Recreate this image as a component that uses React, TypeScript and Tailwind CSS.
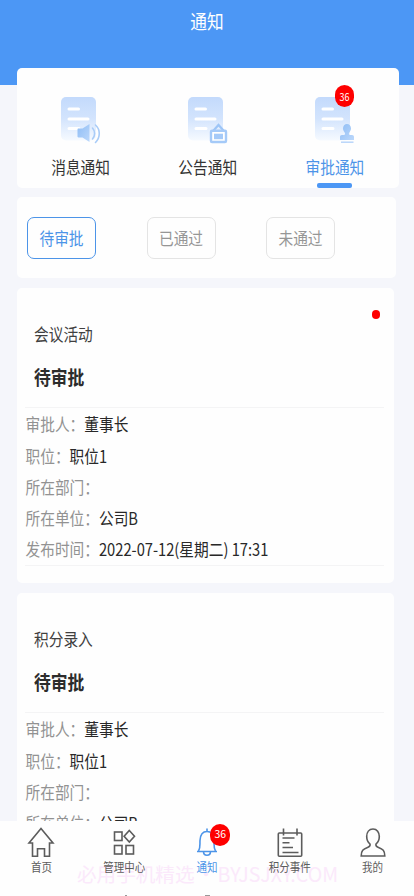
import type { ReactNode } from 'react'
import clsx from 'clsx'

interface Notice {
  title: string
  status: string
  unread: boolean
  rows: { label: string; value: string }[]
}

const rows = [
  { label: '审批人：', value: '董事长' },
  { label: '职位：', value: '职位1' },
  { label: '所在部门：', value: '' },
  { label: '所在单位：', value: '公司B' },
  { label: '发布时间：', value: '2022-07-12(星期二) 17:31' },
]

const notices: Notice[] = [
  { title: '会议活动', status: '待审批', unread: true, rows },
  { title: '积分录入', status: '待审批', unread: false, rows },
]

const filters = ['待审批', '已通过', '未通过']

// Tall, narrow lettering used everywhere on the page
function Tall({ children, className }: { children: ReactNode; className?: string }) {
  return <span className={clsx('inline-block scale-y-[1.15] whitespace-nowrap', className)}>{children}</span>
}

function DocIcon({ children }: { children: ReactNode }) {
  return (
    <svg width="42" height="50" viewBox="0 0 42 50" fill="none">
      <defs>
        <linearGradient id="doc" x1="0" y1="0" x2="0" y2="1">
          <stop offset="0" stopColor="#c3dafc" />
          <stop offset="0.5" stopColor="#d3e4fd" />
          <stop offset="1" stopColor="#f6faff" />
        </linearGradient>
        <linearGradient id="mark" x1="0" y1="0" x2="1" y2="1">
          <stop offset="0" stopColor="#8fbdf5" />
          <stop offset="1" stopColor="#bcd8fb" />
        </linearGradient>
      </defs>
      <rect x="1" y="1" width="35" height="43.5" rx="5" fill="url(#doc)" />
      <path d="M9 13h9.500M9 23h19M9 32.500h10" stroke="#fff" strokeWidth="3" strokeLinecap="round" />
      {children}
    </svg>
  )
}

const tabs = [
  {
    name: '消息通知',
    icon: (
      <DocIcon>
        <path d="M18.500 32.500h4l7-4.500v18l-7-4.500h-4c-.8 0-1-.5-1-1.200v-6.600c0-.8.3-1.200 1-1.200z" fill="url(#mark)" />
        <path d="M32.500 32c2.800 3 2.800 8 0 11M35.500 29c5 4.500 5 12.500 0 17.500" stroke="#a9ccf8" strokeWidth="1.600" strokeLinecap="round" />
      </DocIcon>
    ),
  },
  {
    name: '公告通知',
    icon: (
      <DocIcon>
        <path d="M26.500 34.500l5-5.500 5 5.500" stroke="#9dc5f7" strokeWidth="2.200" />
        <rect x="24" y="34.800" width="15" height="11.200" rx="1" fill="#fff" stroke="#a5caf8" strokeWidth="2.400" />
        <rect x="27" y="37.700" width="9" height="5.500" fill="#a5caf8" />
      </DocIcon>
    ),
  },
  {
    name: '审批通知',
    icon: (
      <DocIcon>
        <path
          d="M33 28c2.300 0 4 2 4 4.500 0 1.800-1 3-1.800 4.200-.6 1-.4 2.300 1 2.300H38c1.300 0 2 .7 2 2v3H26v-3c0-1.300.7-2 2-2h1.800c1.400 0 1.600-1.300 1-2.300-.8-1.200-1.800-2.400-1.800-4.200 0-2.500 1.700-4.500 4-4.500z"
          fill="url(#mark)"
        />
        <path d="M27 46.200h12.500" stroke="#b9d5fa" strokeWidth="1.500" />
      </DocIcon>
    ),
    badge: '36',
  },
]

const navItems = [
  {
    name: '首页',
    icon: <path d="M3.500 16H2L14 1.500 26 16h-3.500v13.200h-5v-7.400h-7v7.400h-5V16z" />,
  },
  {
    name: '管理中心',
    icon: (
      <>
        <rect x="4.500" y="5" width="7.500" height="8.500" />
        <path d="M19.300 3.500l5.200 5.800-5.200 5.800-5.200-5.800z" />
        <rect x="4.500" y="18.500" width="7.500" height="8.500" />
        <rect x="16" y="18.500" width="7.500" height="8.500" />
      </>
    ),
  },
  {
    name: '通知',
    active: true,
    badge: '36',
    icon: (
      <>
        <path d="M14 1.500v3M5.500 24c2-3 1.300-6 1.500-10.500.3-6 2.800-9 7-9s6.700 3 7 9c.2 4.500-.5 7.500 1.500 10.500" />
        <path d="M4 24.500h20M10.500 24.500c0 5 7 5 7 0" />
      </>
    ),
  },
  {
    name: '积分事件',
    icon: (
      <>
        <rect x="2.300" y="6" width="23.400" height="23.200" rx="1" />
        <path d="M7.500 1.500v7M21 1.500v7M6.500 11h12M6.500 15.800h7M6.500 20.500h10.500M6.500 25.500h16" />
      </>
    ),
  },
  {
    name: '我的',
    icon: (
      <path d="M14 2c-4 0-6.300 3.300-6.300 7.500 0 3.500 1.300 5.800 3.300 7.500.5 1.700-.3 2.500-2 3.200-5 2-6.800 3-6.800 8.800h23.600c0-5.800-1.800-6.800-6.800-8.800-1.700-.7-2.500-1.500-2-3.200 2-1.700 3.300-4 3.300-7.500C20.300 5.300 18 2 14 2z" />
    ),
  },
]

function NoticeCard({ notice }: { notice: Notice }) {
  return (
    <section className="relative h-[295.5px] w-[376.5px] shrink-0 rounded-[5px] bg-[#fefefe] pt-8">
      {notice.unread && <span className="absolute top-[22.5px] right-[13.5px] h-[9px] w-[8px] rounded-full bg-[#fe0000]" />}
      <h3 className="flex h-[30px] items-center pl-[17px] text-[14.7px] text-[#404040]">
        <Tall>{notice.title}</Tall>
      </h3>
      <p className="flex h-14 items-center pl-[17px] text-[16.8px] font-bold text-[#2c2c2c]">
        <Tall>{notice.status}</Tall>
      </p>
      <dl className="mt-[1.5px] mr-[10px] ml-[7.5px] border-y border-[#f4f4f5] pt-px">
        {notice.rows.map((row) => (
          <div key={row.label} className="flex h-[31.3px] items-center pl-px text-[14.7px]">
            <dt className="text-[#929292]">
              <Tall>{row.label}</Tall>
            </dt>
            <dd className="text-[#282828]">
              <Tall>{row.value}</Tall>
            </dd>
          </div>
        ))}
      </dl>
    </section>
  )
}

export default function App() {
  return (
    <div className="flex h-[896px] w-[414px] flex-col overflow-hidden bg-[#f5f6fb] font-['Noto_Sans_CJK_SC',sans-serif] leading-none">
      <header className="flex h-[84.5px] shrink-0 justify-center bg-[#4c97f5] pt-[13px] text-[16.7px] text-white">
        <Tall className="h-[17px]">通知</Tall>
      </header>

      <main className="-mt-[17px] flex min-h-0 flex-1 flex-col gap-[9.5px] overflow-hidden pl-[17px]">
        <section className="grid h-[120px] w-[381.5px] shrink-0 grid-cols-3 rounded-[5px] bg-[#fefefe]">
          {tabs.map((tab) => (
            <button key={tab.name} className="flex flex-col items-center pt-[28.5px]">
              <span className="relative">
                {tab.icon}
                {tab.badge && (
                  <span className="absolute -top-[11px] left-[21px] flex h-[22px] w-[19px] items-center justify-center rounded-full bg-[#fe0000] text-[9px] text-white">
                    <Tall>{tab.badge}</Tall>
                  </span>
                )}
              </span>
              <span className={clsx('mt-[13.5px] h-[16px] text-[14.7px]', tab.badge ? 'text-[#4c94e8]' : 'text-[#333]')}>
                <Tall>{tab.name}</Tall>
              </span>
              {tab.badge && <span className="mt-[7.5px] h-[5px] w-[35px] rounded-[2px] bg-[#4c97f5]" />}
            </button>
          ))}
        </section>

        <section className="flex h-[81px] w-[378.5px] shrink-0 gap-[50.5px] rounded-[5px] bg-[#fefefe] pt-[19.5px] pl-[10px]">
          {filters.map((name, index) => (
            <button
              key={name}
              className={clsx(
                'flex h-[42.5px] w-[69px] items-center justify-center rounded-[7px] border pt-px text-[14.7px]',
                index === 0 ? 'border-[#4c94e8] text-[#4c94e8]' : 'border-[#e4e4e4] text-[#969696]'
              )}
            >
              <Tall>{name}</Tall>
            </button>
          ))}
        </section>

        {notices.map((notice) => (
          <NoticeCard key={notice.title} notice={notice} />
        ))}
      </main>

      <nav className="relative grid h-[75.5px] shrink-0 grid-cols-5 bg-[#fefefe]">
        <span className="absolute top-[43.5px] left-[77px] text-[19.6px] whitespace-nowrap text-[#fbe9fb]">
          必用手机精选<span className="inline-block w-[23px] text-center">·</span>BYJSJXY.COM
        </span>
        {navItems.map((item) => (
          <button
            key={item.name}
            className={clsx('relative flex flex-col items-center pt-[6px]', item.active ? 'text-[#4c94e8]' : 'text-[#5c5c5c]')}
          >
            <span className="relative">
              <svg width="28" height="31" viewBox="0 0 28 31" fill="none" stroke="currentColor" strokeWidth="1.600">
                {item.icon}
              </svg>
              {item.badge && (
                <span className="absolute -top-[3px] left-[17px] flex h-[22px] w-[20.5px] items-center justify-center rounded-full bg-[#fe0000] text-[10.5px] text-white">
                  {item.badge}
                </span>
              )}
            </span>
            <span className="mt-[4px] text-[10.5px]">
              <Tall>{item.name}</Tall>
            </span>
          </button>
        ))}
        {/* tips of the system buttons below the bar */}
        <span className="absolute bottom-0 left-[124.5px] h-px w-[2px] bg-[#999]" />
        <span className="absolute bottom-0 left-[204.5px] h-px w-[5px] bg-[#999]" />
      </nav>
    </div>
  )
}
